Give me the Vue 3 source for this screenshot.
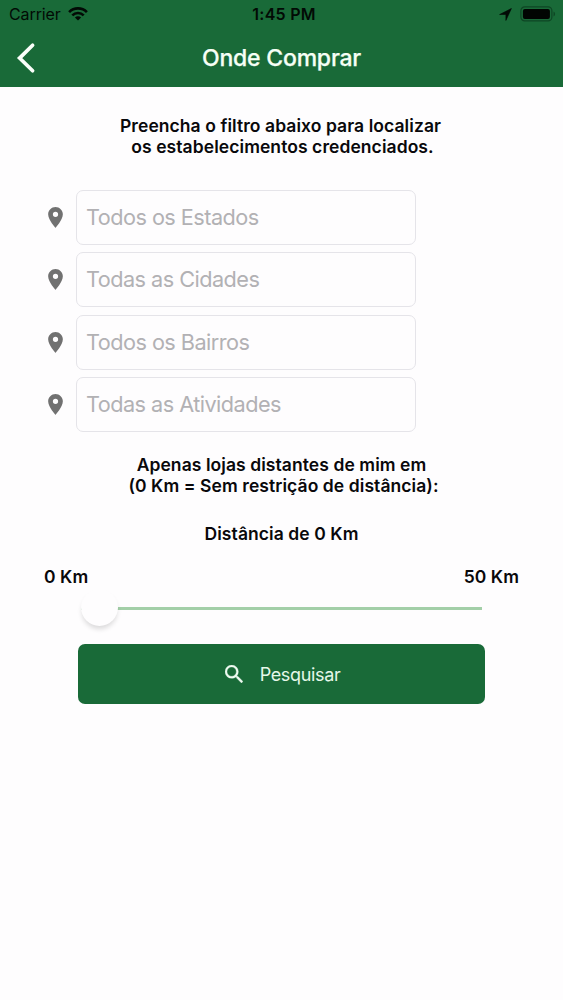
<script setup>
import { ref } from 'vue'

const filters = ['Todos os Estados', 'Todas as Cidades', 'Todos os Bairros', 'Todas as Atividades']
const distance = ref(0)
</script>

<template>
  <div class="screen">
    <header class="header">
      <div class="status">
        <div class="status-left">
          <span class="carrier">Carrier</span>
          <svg class="wifi" viewBox="0 0 20 14" width="20" height="14">
            <g fill="none" stroke="#020a05" stroke-width="2.6">
              <path d="M1.1 5.1a12.6 12.6 0 0 1 17.8 0" />
              <path d="M4.3 8.4a8.1 8.1 0 0 1 11.4 0" />
            </g>
            <path d="M10 13.6 6.9 10.5a4.4 4.4 0 0 1 6.2 0z" fill="#020a05" />
          </svg>
        </div>
        <span class="clock">1:45 PM</span>
        <div class="status-right">
          <svg class="arrow" viewBox="0 0 13 13" width="13" height="13">
            <path d="M12.4.5 6.9 12.4V6.5H.6z" fill="#020a05" stroke="#020a05" stroke-width=".6" stroke-linejoin="round" />
          </svg>
          <svg class="battery" viewBox="0 0 36 16" width="36" height="16">
            <rect x=".9" y=".9" width="31" height="14" rx="3.8" fill="none" stroke="#0e4624" stroke-width="1.2" />
            <rect x="2.9" y="2.9" width="27" height="10" rx="2" fill="#010502" />
            <path d="M33.5 5.6a2.6 2.6 0 0 1 0 4.8z" fill="#0e4624" />
          </svg>
        </div>
      </div>
      <nav class="nav">
        <svg class="back" viewBox="0 0 20 32" width="20" height="32">
          <path d="M16.600 3.300 3.600 16.100l13 12.700" fill="none" stroke="#fafffa" stroke-width="3.700" stroke-linecap="round" stroke-linejoin="miter" />
        </svg>
        <h1 class="title">Onde Comprar</h1>
      </nav>
    </header>

    <main class="content">
      <p class="copy intro"><span class="l1">Preencha o filtro abaixo para localizar</span><br /><span class="l2">os estabelecimentos credenciados.</span></p>

      <div class="filters">
        <div v-for="label in filters" :key="label" class="filter">
          <svg class="pin" viewBox="5 2 14 20" width="15" height="21">
            <path fill="#717171" d="M12 2C8.13 2 5 5.13 5 9c0 5.25 7 13 7 13s7-7.75 7-13c0-3.87-3.13-7-7-7zm0 9.500a2.500 2.500 0 0 1 0-5 2.500 2.500 0 0 1 0 5z" />
          </svg>
          <div class="field"><span>{{ label }}</span></div>
        </div>
      </div>

      <p class="copy range-copy"><span class="l3">Apenas lojas distantes de mim em</span><br /><span class="l4">(0 Km = Sem restrição de distância):</span></p>
      <p class="copy distance"><span>Distância de {{ distance }} Km</span></p>

      <div class="copy limits"><span>0 Km</span><span>50 Km</span></div>
      <div class="slider">
        <div class="track"></div>
        <div class="thumb"></div>
      </div>

      <button class="search" type="button">
        <svg viewBox="3 3 17.500 17.500" width="18" height="18">
          <path fill="#effbf1" stroke="#effbf1" stroke-width=".3" d="M15.500 14h-.79l-.28-.27A6.47 6.47 0 0 0 16 9.500 6.500 6.500 0 1 0 9.500 16c1.610 0 3.090-.59 4.230-1.570l.27.28v.79l5 4.990L20.490 19zm-6 0C7.010 14 5 11.990 5 9.500S7.010 5 9.500 5 14 7.010 14 9.500 11.990 14 9.500 14z" />
        </svg>
        <span>Pesquisar</span>
      </button>
    </main>
  </div>
</template>

<style>
body {
  background: #fefdfe;
}
</style>

<style scoped>
.screen {
  width: 563px;
  height: 1000px;
  overflow: hidden;
  background: #fefdfe;
  color: #09080b;
  font-family: Inter, "Liberation Sans", sans-serif;
}
.header {
  height: 87px;
  background: #196a38;
}
.status {
  display: grid;
  grid-template-columns: 1fr auto 1fr;
  align-items: center;
  height: 28px;
  padding: 0 7px 0 9px;
  color: #020a05;
  font-size: 16px;
  line-height: 20px;
}
.status-left,
.status-right {
  display: flex;
  align-items: center;
}
.carrier {
  letter-spacing: -0.1px;
}
.wifi {
  margin-left: 7px;
}
.clock {
  margin-left: 3px;
  font-size: 16px;
  font-weight: 600;
  letter-spacing: 0.25px;
}
.status-right {
  justify-content: flex-end;
}
.arrow {
  margin-right: 8px;
}
.nav {
  display: grid;
  grid-template-columns: 40px 1fr 40px;
  align-items: center;
  height: 59px;
}
.back {
  margin-left: 16px;
}
.title {
  margin: 0;
  color: #f6fff5;
  font-size: 23px;
  font-weight: 500;
  letter-spacing: -0.2px;
  line-height: 28px;
  text-align: center;
  white-space: nowrap;
  -webkit-text-stroke: 0.25px #f6fff5;
}
.content {
  display: flex;
  flex-direction: column;
}
.copy {
  margin: 0;
  font-size: 17.500px;
  font-weight: 600;
  letter-spacing: 0.07px;
  line-height: 21px;
  text-align: center;
  white-space: nowrap;
}
.intro {
  margin-top: 28px;
  margin-right: 2px;
}
.l2 {
  margin-left: 4px;
}
.filters {
  display: grid;
  gap: 7.400px;
  margin: 33px 0 0 48px;
}
.filter {
  display: flex;
  align-items: center;
  height: 55px;
}
.pin {
  margin-left: 0.4px;
}
.field {
  display: flex;
  align-items: center;
  box-sizing: border-box;
  width: 340px;
  height: 55px;
  margin-left: 12.600px;
  padding: 0 0 1px 9px;
  border: 1px solid #e5e4e9;
  border-radius: 7px;
  color: #b2b1b4;
  font-size: 21.700px;
  letter-spacing: -0.54px;
}
.range-copy {
  margin-top: 22px;
}
.l4 {
  margin-left: 4px;
}
.distance {
  margin-top: 27px;
}
.limits {
  display: flex;
  justify-content: space-between;
  margin: 22px 44px 0;
}
.slider {
  position: relative;
  box-sizing: border-box;
  height: 57px;
  margin: 0 81px;
  padding-top: 20px;
}
.track {
  height: 3px;
  background: #a3cfa8;
}
.thumb {
  position: absolute;
  top: 2px;
  left: 0;
  width: 37px;
  height: 37px;
  border-radius: 50%;
  background: #fefdfe;
  box-shadow: 0 4px 5px -1px rgba(0, 0, 0, 0.14);
}
.search {
  display: flex;
  align-items: center;
  justify-content: center;
  gap: 17px;
  width: 407px;
  height: 60px;
  margin: 0 0 0 78px;
  padding: 0 0 0 2px;
  border: 0;
  border-radius: 7px;
  background: #196a38;
  color: #e6f8e9;
  font-family: inherit;
  font-size: 18px;
  letter-spacing: -0.35px;
}
</style>
